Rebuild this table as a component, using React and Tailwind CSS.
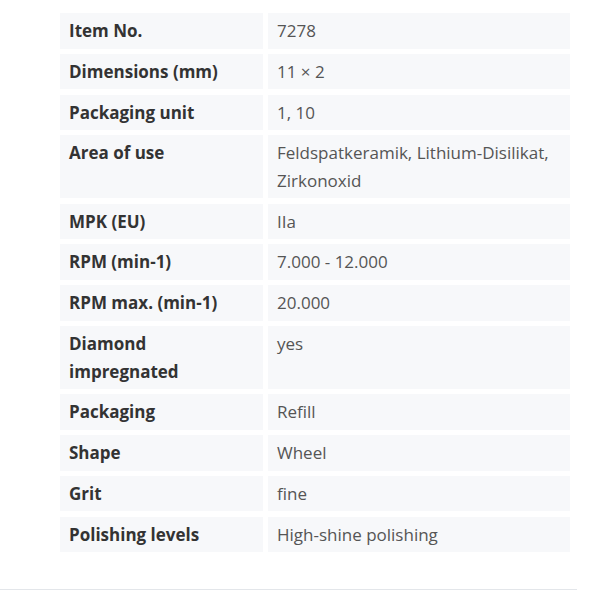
export default function App() {
  const rows = [
    ["Item No.", "7278"],
    ["Dimensions (mm)", "11 × 2"],
    ["Packaging unit", "1, 10"],
    ["Area of use", "Feldspatkeramik, Lithium-Disilikat, Zirkonoxid"],
    ["MPK (EU)", "IIa"],
    ["RPM (min-1)", "7.000 - 12.000"],
    ["RPM max. (min-1)", "20.000"],
    ["Diamond impregnated", "yes"],
    ["Packaging", "Refill"],
    ["Shape", "Wheel"],
    ["Grit", "fine"],
    ["Polishing levels", "High-shine polishing"],
  ];
  return (
    <div className="w-[600px] h-[600px] bg-white overflow-hidden" style={{ fontFamily: '"Open Sans", sans-serif' }}>
      <div className="w-[577px] pt-[13px] border-b border-[#e3e6ea] pb-[37px]">
        <div className="ml-[60px] grid grid-cols-[203px_302px] gap-x-[5px] gap-y-[5.3px]">
          {rows.map(([k, v]) => (
            <>
              <div key={k + "k"} className="bg-[#f7f8fa] px-[9px] py-[4px] text-[17px] leading-[27.5px] font-bold text-[#333]">{k}</div>
              <div key={k + "v"} className="bg-[#f7f8fa] px-[9px] py-[4px] text-[17px] leading-[27.5px] text-[#555]">{v}</div>
            </>
          ))}
        </div>
      </div>
    </div>
  );
}
